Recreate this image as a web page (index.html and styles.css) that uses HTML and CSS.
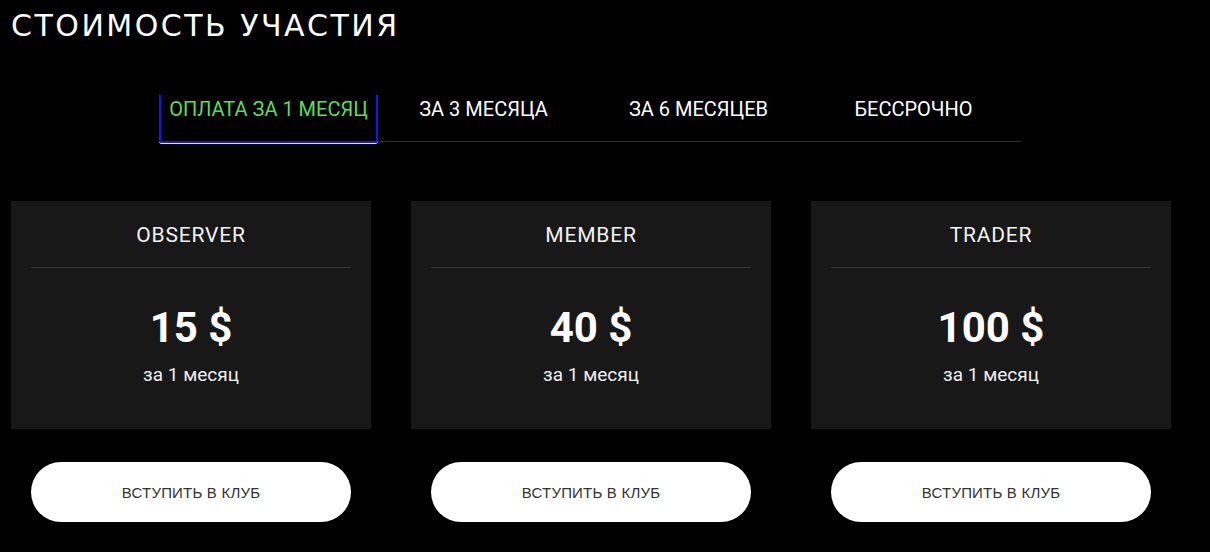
FILE: index.html
```html
<!DOCTYPE html>
<html lang="ru">
<head>
<meta charset="utf-8">
<title>Стоимость участия</title>
<link rel="stylesheet" href="styles.css">
</head>
<body>
<div class="page">
  <h1 class="title">СТОИМОСТЬ УЧАСТИЯ</h1>
  <div class="tabs">
    <div class="tab tab-active">ОПЛАТА ЗА 1 МЕСЯЦ</div>
    <div class="tab">ЗА 3 МЕСЯЦА</div>
    <div class="tab">ЗА 6 МЕСЯЦЕВ</div>
    <div class="tab">БЕССРОЧНО</div>
  </div>
  <div class="plans">
    <div class="plan">
      <div class="card">
        <div class="card-name">OBSERVER</div>
        <div class="card-line"></div>
        <div class="card-price">15 $</div>
        <div class="card-period">за 1 месяц</div>
      </div>
      <div class="btn">ВСТУПИТЬ В КЛУБ</div>
    </div>
    <div class="plan">
      <div class="card">
        <div class="card-name">MEMBER</div>
        <div class="card-line"></div>
        <div class="card-price">40 $</div>
        <div class="card-period">за 1 месяц</div>
      </div>
      <div class="btn">ВСТУПИТЬ В КЛУБ</div>
    </div>
    <div class="plan">
      <div class="card">
        <div class="card-name">TRADER</div>
        <div class="card-line"></div>
        <div class="card-price">100 $</div>
        <div class="card-period">за 1 месяц</div>
      </div>
      <div class="btn">ВСТУПИТЬ В КЛУБ</div>
    </div>
  </div>
</div>
</body>
</html>
```
FILE: styles.css
```css
html, body {
  margin: 0;
  padding: 0;
  background: #000;
}
body {
  color: #fff;
  font-family: Roboto, "Noto Sans", sans-serif;
}
.page {
  width: 1160px;
  padding: 8px 0 0 11px;
}
.title {
  margin: 0;
  font-family: "DejaVu Sans", sans-serif;
  font-weight: normal;
  font-size: 30px;
  line-height: 36px;
  letter-spacing: 2.5px;
  color: #fff;
}
.tabs {
  display: flex;
  width: 860px;
  margin: 51px 0 0 150px;
  border-bottom: 1px solid #2c2c2c;
}
.tab {
  flex: 1;
  text-align: center;
  font-size: 20px;
  line-height: 24px;
  padding: 2px 0 20px;
  color: #fff;
}
.tab-active {
  position: relative;
  color: #5ddc57;
}
.tab-active::after {
  content: "";
  position: absolute;
  left: -2px;
  right: -2px;
  top: 0;
  bottom: -2px;
  border: 2px solid #1616f5;
  border-top: none;
  border-radius: 0 0 3px 3px;
  box-shadow: 0 1px 0 0 #fff;
}
.plans {
  display: flex;
  gap: 40px;
  margin-top: 59px;
}
.plan {
  width: 360px;
  display: flex;
  flex-direction: column;
}
.card {
  background: #181818;
  height: 228px;
  box-sizing: border-box;
  padding: 22px 20px 0;
  text-align: center;
}
.card-name {
  font-size: 21px;
  line-height: 24px;
  letter-spacing: 0.8px;
  color: #f2f2f2;
}
.card-line {
  height: 1px;
  background: #3a3a3a;
  margin-top: 20px;
}
.card-price {
  margin-top: 35px;
  font-size: 42px;
  line-height: 50px;
  font-weight: bold;
  color: #fff;
}
.card-period {
  margin-top: 11px;
  font-size: 19px;
  line-height: 22px;
  color: #eee;
}
.btn {
  margin: 33px 20px 0;
  height: 60px;
  border-radius: 30px;
  background: #fff;
  color: #333;
  font-family: "Liberation Sans", Arial, sans-serif;
  font-size: 15px;
  letter-spacing: 0.2px;
  display: flex;
  align-items: center;
  justify-content: center;
}
```
